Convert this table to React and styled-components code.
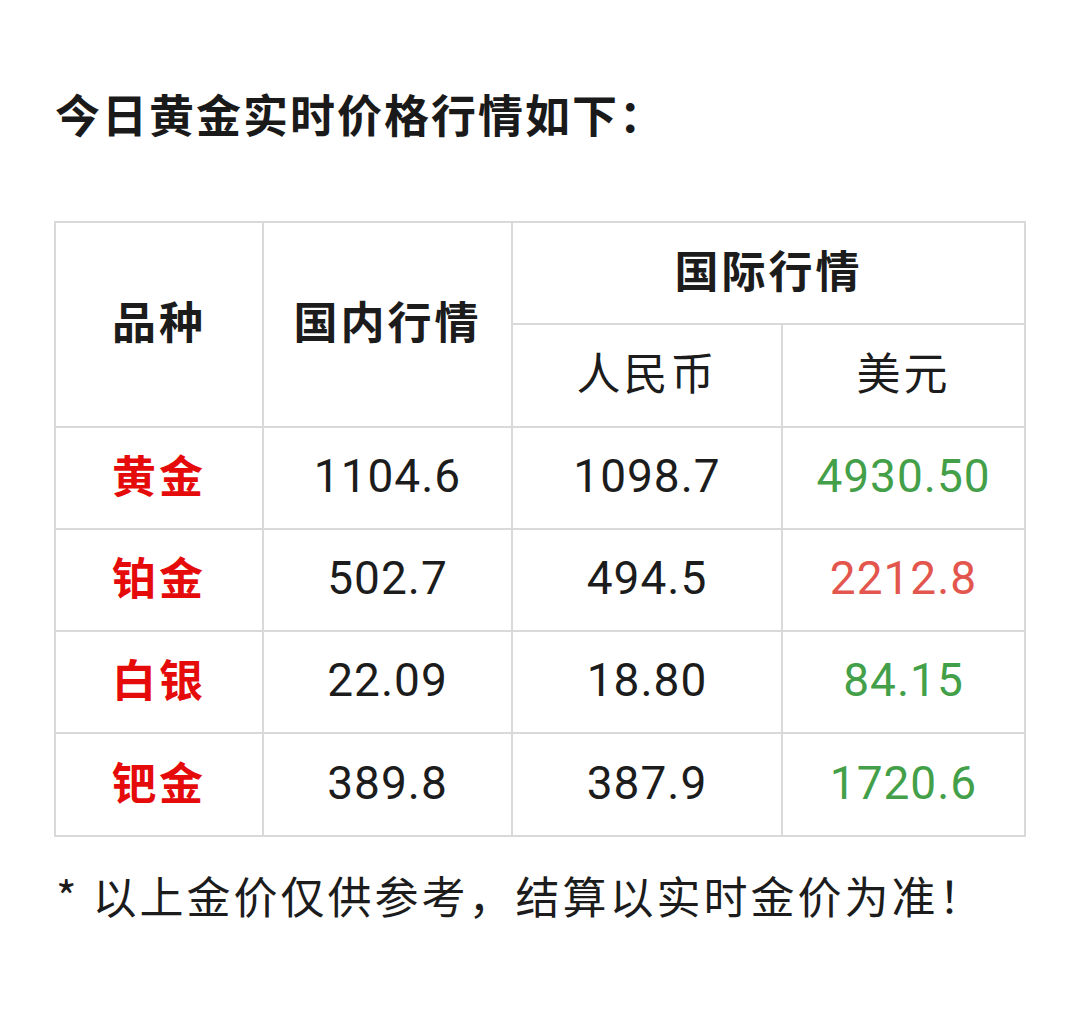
import React from "react";
import styled, { createGlobalStyle } from "styled-components";

const GlobalStyle = createGlobalStyle`
  html, body {
    margin: 0;
    padding: 0;
    background: #ffffff;
  }
  body {
    font-family: "Noto Sans CJK SC", "Noto Sans", sans-serif;
    color: #1c1c1c;
  }
`;

const Page = styled.div`
  width: 1080px;
  min-height: 1011px;
  box-sizing: border-box;
  padding: 84px 0 0 54px;
`;

const Title = styled.h1`
  margin: 0 0 77px 1px;
  font-size: 45px;
  line-height: 60px;
  font-weight: 700;
  letter-spacing: 2px;
  color: #1a1a1a;
`;

const Grid = styled.div`
  display: grid;
  width: 972px;
  box-sizing: border-box;
  grid-template-columns: 206px 247px 268px 241px;
  grid-auto-rows: 100.3px;
  gap: 2px;
  padding: 2px;
  background: #d9d9d9;
`;

const Cell = styled.div`
  display: flex;
  align-items: center;
  justify-content: center;
  box-sizing: border-box;
  padding-bottom: ${(p) => (p.num ? "4px" : "8px")};
  background: #ffffff;
  font-size: ${(p) => (p.num ? "46px" : "44px")};
  font-weight: ${(p) => (p.bold ? 700 : 400)};
  letter-spacing: ${(p) => (p.num ? "1px" : "3px")};
  font-family: ${(p) =>
    p.num
      ? `Roboto, "Noto Sans CJK SC", sans-serif`
      : `"Noto Sans CJK SC", "Noto Sans", sans-serif`};
  color: ${(p) => p.tone || "#1c1c1c"};
  grid-column: ${(p) => p.col || "auto"};
  grid-row: ${(p) => p.row || "auto"};
  white-space: nowrap;
`;

const Note = styled.p`
  margin: 28px 0 0 2px;
  font-size: 44px;
  line-height: 60px;
  letter-spacing: 3px;
  color: #1c1c1c;
`;

const RED = "#e60b0b";
const GREEN = "#43a049";
const SOFT_RED = "#e3564d";

const rows = [
  { name: "黄金", cn: "1104.6", rmb: "1098.7", usd: "4930.50", tone: GREEN },
  { name: "铂金", cn: "502.7", rmb: "494.5", usd: "2212.8", tone: SOFT_RED },
  { name: "白银", cn: "22.09", rmb: "18.80", usd: "84.15", tone: GREEN },
  { name: "钯金", cn: "389.8", rmb: "387.9", usd: "1720.6", tone: GREEN },
];

export default function App() {
  return (
    <Page>
      <GlobalStyle />
      <Title>今日黄金实时价格行情如下：</Title>
      <Grid>
        <Cell bold col="1" row="1 / span 2">品种</Cell>
        <Cell bold col="2" row="1 / span 2">国内行情</Cell>
        <Cell bold col="3 / span 2" row="1">国际行情</Cell>
        <Cell col="3" row="2">人民币</Cell>
        <Cell col="4" row="2">美元</Cell>
        {rows.map((r) => (
          <React.Fragment key={r.name}>
            <Cell bold tone={RED}>{r.name}</Cell>
            <Cell num>{r.cn}</Cell>
            <Cell num>{r.rmb}</Cell>
            <Cell num tone={r.tone}>{r.usd}</Cell>
          </React.Fragment>
        ))}
      </Grid>
      <Note>* 以上金价仅供参考，结算以实时金价为准！</Note>
    </Page>
  );
}
